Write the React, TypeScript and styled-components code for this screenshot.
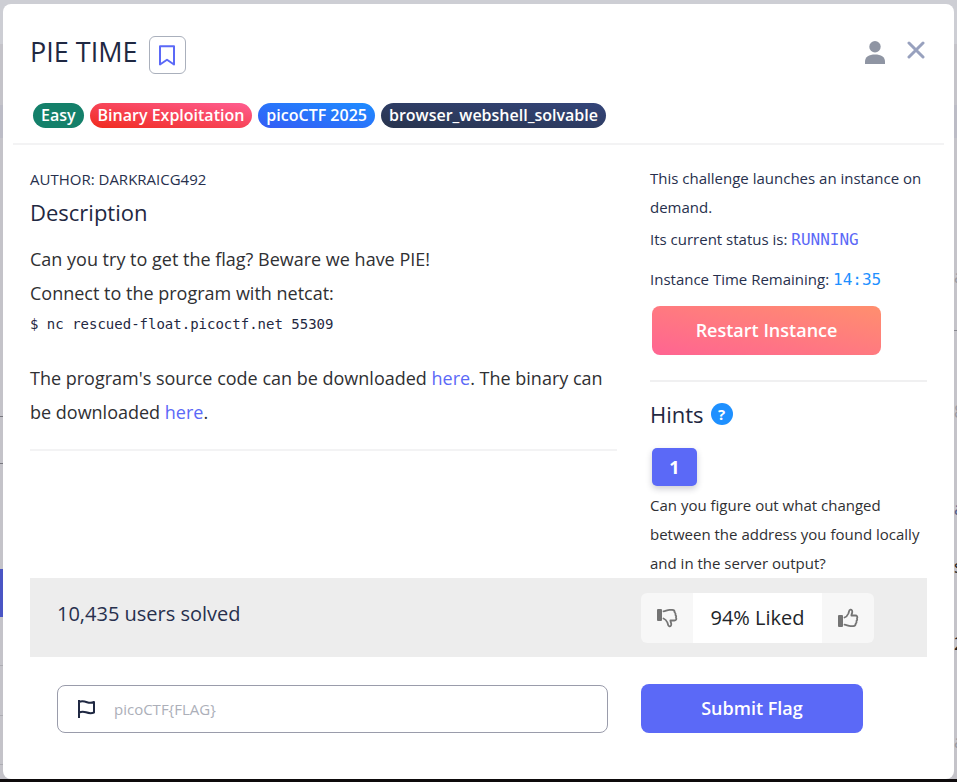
import React from 'react';
import styled, { createGlobalStyle } from 'styled-components';

const Global = createGlobalStyle`
  * { box-sizing: border-box; }
  body { margin: 0; background: #0e0b0c; font-family: "Open Sans", "Noto Sans", sans-serif; color: #27304d; }
  h1, h2, p, ul { margin: 0; padding: 0; font-weight: 400; }
  button, input { font-family: inherit; }
  svg { display: block; }
`;

const Backdrop = styled.div`
  display: grid;
  grid-template-columns: 3px 1fr 3px;
  min-height: calc(100vh - 3px);
  background: linear-gradient(#cdced4 0 44px, #c4c3c9 44px 105px, #bcbcc6 105px 138px, #c4c3c9 138px);
`;
const Edge = styled.div`
  display: flex;
  flex-direction: column;
  overflow: hidden;
`;
const Strip = styled.div<{ $h: number; $bg?: string; $line?: string }>`
  flex: 0 0 ${p => p.$h}px;
  background: ${p => p.$bg || 'transparent'};
  border-bottom: ${p => (p.$line ? `1px solid ${p.$line}` : '0')};
`;
const Glyph = styled.div<{ $c: string }>`
  flex: 0 0 20px;
  font-size: 18px;
  line-height: 20px;
  color: ${p => p.$c};
`;

const Modal = styled.main`
  margin-top: 4px;
  padding: 0 10px 45px;
  background: #fff;
  border-radius: 8px;
`;
const Header = styled.header`
  display: flex;
  flex-direction: column;
  gap: 29px;
  padding: 32px 17px 15px;
  border-bottom: 2px solid #f3f3f4;
`;
const TitleRow = styled.div`
  display: flex;
  align-items: flex-start;
  gap: 11px;
`;
const Title = styled.h1`
  font-size: 27px;
  line-height: 32px;
  color: #1f2842;
`;
const IconButton = styled.button`
  display: grid;
  place-items: center;
  padding: 0;
  border: 0;
  background: none;
  cursor: pointer;
`;
const BookmarkButton = styled(IconButton)`
  width: 37px;
  height: 38px;
  border: 1px solid #aab0bc;
  border-radius: 6px;
`;
const HeaderActions = styled.div`
  display: flex;
  align-items: flex-start;
  gap: 22px;
  margin-left: auto;
  padding: 5px 2px 0 0;
`;
const Tags = styled.ul`
  display: flex;
  gap: 6px;
  padding-left: 3px;
  list-style: none;
`;
const Tag = styled.li<{ $bg: string }>`
  padding: 0 8px;
  border-radius: 13px;
  background: ${p => p.$bg};
  color: #fff;
  font-size: 16px;
  font-weight: 600;
  line-height: 25px;
`;

const Body = styled.div`
  display: grid;
  grid-template-columns: 587fr 277fr;
  gap: 33px;
  padding: 19px 17px 0;
`;
const Column = styled.section`
  min-width: 0;
`;
const Author = styled.p`
  font-size: 15px;
  line-height: 30px;
`;
const Heading = styled.h2`
  display: flex;
  align-items: center;
  gap: 7px;
  font-size: 22px;
  line-height: 36px;
  color: #1f2842;
`;
const Text = styled.p`
  font-size: 18px;
  line-height: 34px;
  color: #2f3033;
`;
const Description = styled.div`
  padding: 12px 0 20px;
  border-bottom: 2px solid #f3f3f4;
`;
const Code = styled.code`
  display: block;
  padding-bottom: 23px;
  font: 14px/28px "DejaVu Sans Mono", monospace;
  color: #1f2842;
`;
const Link = styled.a`
  color: #5b69f7;
  text-decoration: none;
`;
const Note = styled.p<{ $dark?: boolean }>`
  font-size: 15px;
  line-height: 29px;
  color: ${p => (p.$dark ? '#2f3033' : '#27304d')};
`;
const Status = styled(Note)`
  margin-top: 3px;
`;
const Remaining = styled(Note)`
  margin-top: 11px;
`;
const Mono = styled.span<{ $c: string }>`
  font: 16px "DejaVu Sans Mono", monospace;
  color: ${p => p.$c};
`;
const Action = styled.button`
  border: 0;
  border-radius: 8px;
  background: #5b69f7;
  color: #fff;
  font-size: 18px;
  font-weight: 600;
  line-height: 49px;
  padding: 0;
  cursor: pointer;
`;
const Restart = styled(Action)`
  display: block;
  width: 229px;
  margin: 12px 2px 25px;
  background: linear-gradient(to top right, #ff6492, #ff8f6e);
`;
const Hints = styled.div`
  padding-top: 14px;
  border-top: 2px solid #f0f0f1;
`;
const Help = styled.button`
  width: 22px;
  height: 22px;
  padding: 0;
  border: 0;
  border-radius: 50%;
  background: #1e90ff;
  color: #fff;
  font-size: 15px;
  font-weight: 700;
  line-height: 22px;
`;
const HintTab = styled(Action)`
  display: block;
  width: 45px;
  margin: 16px 2px 5px;
  border-radius: 5px;
  font-weight: 700;
  line-height: 38px;
  box-shadow: 0 3px 6px rgba(30, 30, 60, 0.22);
`;

const columns = `
  display: grid;
  grid-template-columns: 584fr 286fr;
  margin: 0 17px;
  padding-left: 27px;
`;
const Solved = styled.div`
  ${columns}
  padding-top: 15px;
  padding-bottom: 14px;
  background: #ededed;
`;
const Count = styled.p`
  font-size: 20px;
  line-height: 42px;
`;
const Rating = styled.div`
  display: grid;
  grid-template-columns: 52px 129px 52px;
  justify-self: start;
  height: 50px;
  border-radius: 6px;
  overflow: hidden;
  background: #f7f7f7;
`;
const Liked = styled.span`
  background: #fff;
  color: #212529;
  font-size: 20px;
  line-height: 50px;
  text-align: center;
`;
const Form = styled.form`
  ${columns}
  padding-top: 27px;
  align-items: center;
`;
const Field = styled.label`
  display: flex;
  align-items: center;
  gap: 17px;
  height: 48px;
  margin-right: 33px;
  padding: 0 19px;
  border: 1px solid #9a9cab;
  border-radius: 8px;
`;
const Input = styled.input`
  flex: 1;
  min-width: 0;
  padding: 0;
  border: 0;
  outline: 0;
  background: none;
  font-size: 15px;
  color: #27304d;
  &::placeholder { color: #acafb9; opacity: 1; }
`;
const Submit = styled(Action)`
  width: 222px;
`;

const Thumb = ({ down = false }: { down?: boolean }) => (
  <svg width="22" height="20" viewBox="0 0 22 20" aria-hidden="true">
    <g transform={down ? 'matrix(1 0 0 -1 0 20)' : undefined}>
      <rect x="1" y="7" width="5" height="12" rx="1" fill="#747474" />
      <path
        d="M7.500 9.500c2.300-.8 3.200-2.400 3.900-4 .6-1.500.5-3.500 1.900-3.900 1.600-.2 2.200 1.300 1.900 2.900-.2 1.200-.8 2-.8 3h3.900c1.800 0 2.600 1.400 1.700 2.800.4.9.2 2-.5 2.700.2 1 0 2-.8 2.600 0 1.700-.9 2.500-2.400 2.500h-2.600c-2.500 0-3.900-1.200-6.200-1.500"
        fill="none" stroke="#747474" strokeWidth="1.800" strokeLinecap="round" strokeLinejoin="round"
      />
    </g>
  </svg>
);

const tags = [
  ['Easy', '#14806a'],
  ['Binary Exploitation', 'linear-gradient(to top right, #f02a1d, #ff5e92)'],
  ['picoCTF 2025', 'linear-gradient(to top right, #345cf5, #1e8cff)'],
  ['browser_webshell_solvable', 'linear-gradient(to top right, #28344d, #34457a)'],
];

export default function App() {
  return (
    <>
      <Global />
      <Backdrop>
        <Edge aria-hidden="true">
          <Strip $h={417} $line="#77777e" />
          <Strip $h={47} $line="#77777e" />
          <Strip $h={105} />
          <Strip $h={48} $bg="#4a55c4" />
          <Strip $h={49} $line="#adadb3" />
          <Strip $h={50} $line="#adadb3" />
          <Strip $h={49} $line="#adadb3" />
        </Edge>
        <Modal>
          <Header>
            <TitleRow>
              <Title>PIE TIME</Title>
              <BookmarkButton aria-label="Bookmark">
                <svg width="16" height="21" viewBox="0 0 16 21" fill="none" stroke="#5b69f7" strokeWidth="2" strokeLinejoin="round">
                  <path d="M1 1.2h14v18.3l-7-4.8-7 4.8z" />
                </svg>
              </BookmarkButton>
              <HeaderActions>
                <IconButton aria-label="Profile">
                  <svg width="20" height="23" viewBox="0 0 20 23" fill="#8f95a3">
                    <circle cx="10" cy="5.7" r="5.7" />
                    <path d="M0 23v-2.5C0 16 4 13.5 10 13.5s10 2.500 10 7V23z" />
                  </svg>
                </IconButton>
                <IconButton aria-label="Close">
                  <svg width="18" height="18" viewBox="0 0 18 18" stroke="#98a1be" strokeWidth="3" strokeLinecap="round">
                    <path d="M2 2l14 14M16 2L2 16" />
                  </svg>
                </IconButton>
              </HeaderActions>
            </TitleRow>
            <Tags>
              {tags.map(([name, bg]) => <Tag key={name} $bg={bg}>{name}</Tag>)}
            </Tags>
          </Header>
          <Body>
            <Column>
              <Author>AUTHOR: DARKRAICG492</Author>
              <Heading>Description</Heading>
              <Description>
                <Text>Can you try to get the flag? Beware we have PIE!</Text>
                <Text>Connect to the program with netcat:</Text>
                <Code>$ nc rescued-float.picoctf.net 55309</Code>
                <Text>
                  The program's source code can be downloaded <Link href="#source">here</Link>. The binary can be
                  downloaded <Link href="#binary">here</Link>.
                </Text>
              </Description>
            </Column>
            <Column>
              <Note>This challenge launches an instance on demand.</Note>
              <Status>Its current status is: <Mono $c="#5b69f7">RUNNING</Mono></Status>
              <Remaining>Instance Time Remaining: <Mono $c="#1e90ff">14:35</Mono></Remaining>
              <Restart>Restart Instance</Restart>
              <Hints>
                <Heading>Hints <Help aria-label="About hints">?</Help></Heading>
                <HintTab>1</HintTab>
                <Note $dark>Can you figure out what changed between the address you found locally and in the server output?</Note>
              </Hints>
            </Column>
          </Body>
          <Solved>
            <Count>10,435 users solved</Count>
            <Rating>
              <IconButton aria-label="Dislike"><Thumb down /></IconButton>
              <Liked>94% Liked</Liked>
              <IconButton aria-label="Like"><Thumb /></IconButton>
            </Rating>
          </Solved>
          <Form onSubmit={e => e.preventDefault()}>
            <Field>
              <svg width="20" height="20" viewBox="0 0 20 20" fill="none" stroke="#1f2842" strokeWidth="2" strokeLinejoin="round">
                <path d="M2 19V1M2 3c3-1.300 5-.8 8 .2s5 .8 7-.2v10.500c-3 1.200-5 .8-8-.2s-5-.6-7 .2" />
              </svg>
              <Input aria-label="Flag" placeholder="picoCTF{FLAG}" />
            </Field>
            <Submit type="submit">Submit Flag</Submit>
          </Form>
        </Modal>
        <Edge aria-hidden="true">
          <Strip $h={266} />
          <Glyph $c="#9a9aa2">a</Glyph>
          <Strip $h={45} $line="#88888f" />
          <Strip $h={70} />
          <Glyph $c="#9a9aa2">8</Glyph>
          <Strip $h={77} />
          <Glyph $c="#55608c">a</Glyph>
          <Strip $h={38} />
          <Glyph $c="#222">s</Glyph>
          <Strip $h={57} />
          <Glyph $c="#222">2</Glyph>
          <Strip $h={78} />
          <Glyph $c="#9a9aa2">a</Glyph>
        </Edge>
      </Backdrop>
    </>
  );
}
